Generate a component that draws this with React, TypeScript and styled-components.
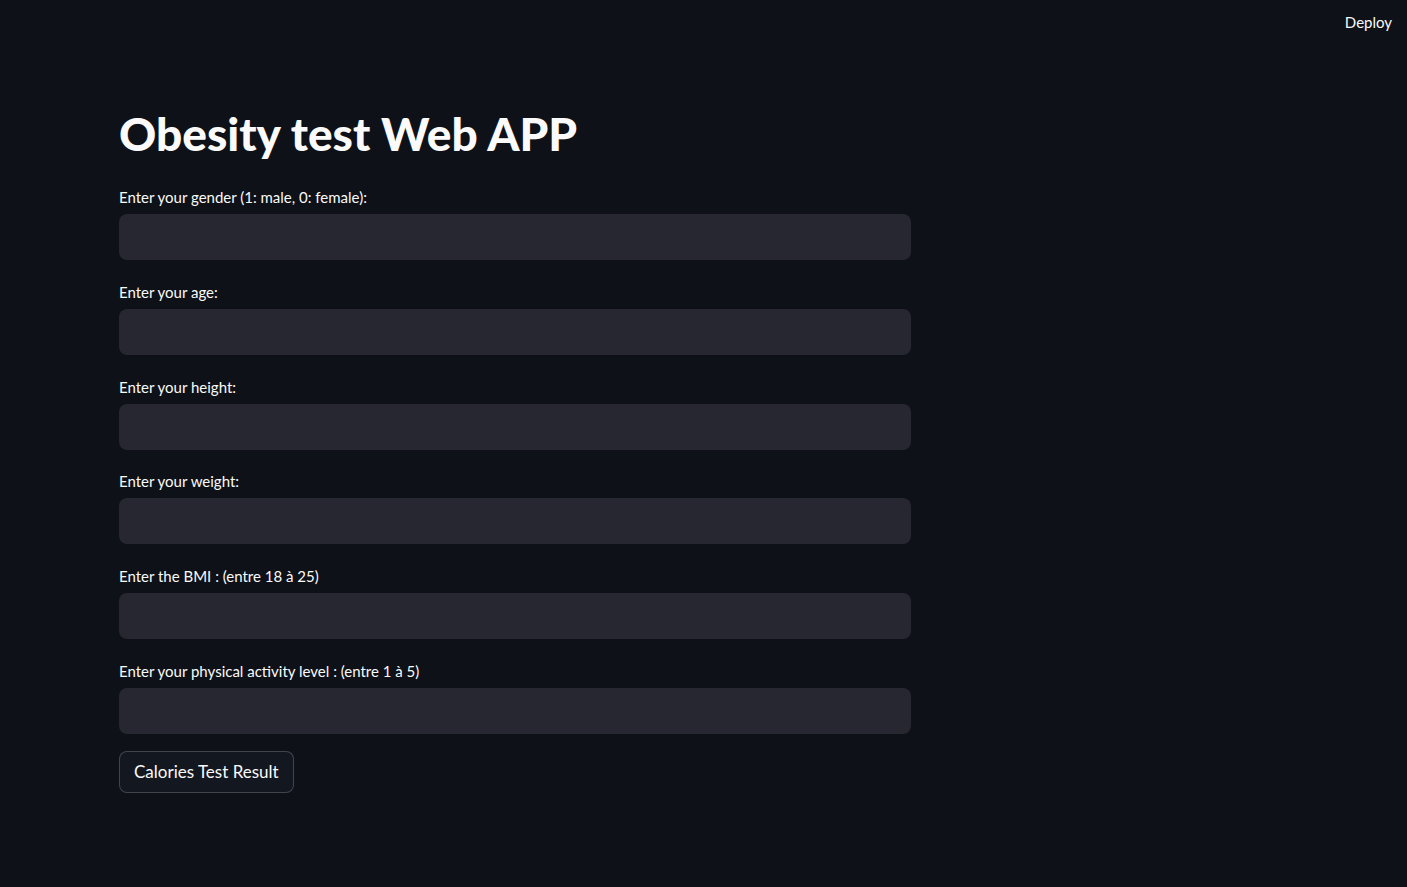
import React from "react";
import styled, { createGlobalStyle } from "styled-components";

const Global = createGlobalStyle`
  html, body { margin: 0; padding: 0; background: #0e1117; }
  body { font-family: Lato, "Noto Sans", sans-serif; color: #fafafa; }
  * { box-sizing: border-box; }
`;

const Page = styled.div`
  min-height: 887px;
  background: #0e1117;
  display: flex;
  flex-direction: column;
`;

const Header = styled.header`
  height: 44px;
  display: flex;
  align-items: center;
  justify-content: flex-end;
  padding-right: 15px;
`;

const DeployButton = styled.button`
  background: transparent;
  border: none;
  color: #fafafa;
  font-family: Lato, sans-serif;
  font-size: 15px;
  padding: 0;
  cursor: pointer;
`;

const Main = styled.main`
  width: 792px;
  margin-left: 119px;
  display: flex;
  flex-direction: column;
`;

const Title = styled.h1`
  margin: 64px 0 0 0;
  font-family: Lato, sans-serif;
  font-weight: 900;
  font-size: 46px;
  line-height: 52px;
  color: #fafafa;
  letter-spacing: 0;
`;

const Form = styled.div`
  margin-top: 25px;
  display: flex;
  flex-direction: column;
  gap: 19.8px;
`;

const Field = styled.div`
  display: flex;
  flex-direction: column;
`;

const Label = styled.label`
  font-size: 15px;
  line-height: 24px;
  margin-bottom: 5px;
  color: #fafafa;
`;

const Input = styled.input`
  height: 46px;
  width: 100%;
  background: #262730;
  border: none;
  border-radius: 8px;
  outline: none;
  color: #fafafa;
  font-family: Lato, sans-serif;
  font-size: 15px;
  padding: 0 14px;
`;

const Button = styled.button`
  align-self: flex-start;
  margin-top: 17px;
  height: 42px;
  padding: 0 14px;
  background: #131720;
  border: 1px solid rgba(250, 250, 250, 0.2);
  border-radius: 8px;
  color: #fafafa;
  font-family: Lato, sans-serif;
  font-size: 17px;
  cursor: pointer;
`;

const fields = [
  "Enter your gender (1: male, 0: female):",
  "Enter your age:",
  "Enter your height:",
  "Enter your weight:",
  "Enter the BMI : (entre 18 à 25)",
  "Enter your physical activity level : (entre 1 à 5)",
];

export default function App() {
  return (
    <Page>
      <Global />
      <Header>
        <DeployButton>Deploy</DeployButton>
      </Header>
      <Main>
        <Title>Obesity test Web APP</Title>
        <Form>
          {fields.map((f) => (
            <Field key={f}>
              <Label>{f}</Label>
              <Input type="text" />
            </Field>
          ))}
        </Form>
        <Button>Calories Test Result</Button>
      </Main>
    </Page>
  );
}
